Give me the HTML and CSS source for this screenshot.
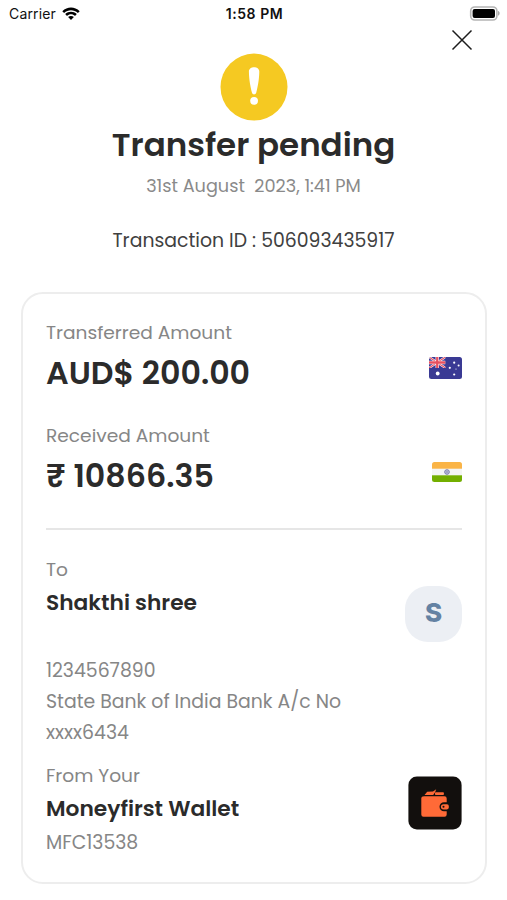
FILE: index.html
```html
<!DOCTYPE html>
<html lang="en">
<head>
<meta charset="utf-8">
<title>Transfer pending</title>
<link rel="stylesheet" href="styles.css">
</head>
<body>
<header class="status">
  <div class="carrier"><span class="carrier-name">Carrier</span>
    <svg class="wifi" viewBox="0 0 18 14"><path d="M0.3 4.2C5.3-.7 12.700-.7 17.700 4.200L15.900 6C12 2.200 6 2.200 2.100 6ZM3.200 7.100C6.500 3.900 11.500 3.900 14.800 7.100L13 8.900C10.700 6.800 7.300 6.800 5 8.900ZM6.100 10C7.700 8.500 10.300 8.500 11.900 10L9 13Z"/></svg>
  </div>
  <span class="clock">1:58 PM</span>
  <svg class="battery" viewBox="0 0 31 15"><rect x="1.700" y="1" width="26.200" height="13" rx="4" fill="#fff" stroke="#b4b4b4" stroke-width="1.600"/><rect x="3.600" y="2.900" width="22.400" height="9.200" rx="2" fill="#000"/><path d="M29 5C31.200 5.700 31.200 9 29 9.700Z" fill="#aaa"/></svg>
</header>
<div class="toolbar">
  <svg class="close" viewBox="0 0 22 22"><path d="M1.500 1.500 20.500 20.500M20.500 1.500 1.500 20.500"/></svg>
</div>
<section class="summary">
  <svg class="alert" viewBox="0 0 68 68"><circle cx="34" cy="33.100" r="33.500" fill="#f5c922"/><path d="M28.900 17.600C28.900 11.800 39.300 11.800 39.300 17.600C39.200 26 37.600 33.500 36.300 38.500C35.700 41 32.500 41 31.900 38.500C30.600 33.500 29 26 28.900 17.600Z" fill="#fff"/><circle cx="34.100" cy="46.800" r="3.900" fill="#fff"/></svg>
  <h1 class="title">Transfer pending</h1>
  <p class="date">31st August&nbsp; 2023, 1:41 PM</p>
  <p class="txid">Transaction ID : 506093435917</p>
</section>
<main class="card">
  <section class="row">
    <div>
      <p class="label">Transferred Amount</p>
      <p class="amount">AUD$ 200.00</p>
    </div>
    <svg class="flag-au" viewBox="0 0 33 22"><clipPath id="au"><rect width="33" height="22" rx="2.500"/></clipPath><clipPath id="uj"><rect width="16.500" height="11"/></clipPath><g clip-path="url(#au)"><rect width="33" height="22" fill="#3a3a94"/><g clip-path="url(#uj)"><path d="M0 0 16.500 11M16.500 0 0 11" stroke="#fff" stroke-width="2.200"/><path d="M0 0 16.500 11M16.500 0 0 11" stroke="#e8505f" stroke-width="1.100"/><path d="M8.250 0V11M0 5.500H16.500" stroke="#fff" stroke-width="3.400"/><path d="M8.250 0V11M0 5.500H16.500" stroke="#e8505f" stroke-width="2.300"/></g><g fill="#fff"><circle cx="8.700" cy="16.500" r="1.900"/><circle cx="25.200" cy="5.700" r="1.100"/><circle cx="20.800" cy="10.800" r="1.100"/><circle cx="29.600" cy="8.500" r="1"/><circle cx="27" cy="12" r=".6"/><circle cx="25.200" cy="17.500" r="1.100"/></g></g></svg>
  </section>
  <section class="row received">
    <div>
      <p class="label">Received Amount</p>
      <p class="amount"><span class="rupee">₹</span>10866.35</p>
    </div>
    <svg class="flag-in" viewBox="0 0 30 20"><clipPath id="in"><rect width="30" height="20" rx="2.500"/></clipPath><g clip-path="url(#in)"><rect width="30" height="20" fill="#f4f5f4"/><rect width="30" height="6.700" fill="#fab446"/><rect y="13.300" width="30" height="6.700" fill="#73af00"/></g><circle cx="15" cy="10" r="2.300" fill="#c5c8dd" stroke="#7779ac" stroke-width="1"/><circle cx="15" cy="10" r=".8" fill="#7779ac"/></svg>
  </section>
  <hr class="divider">
  <section class="row recipient">
    <div>
      <p class="label">To</p>
      <p class="name">Shakthi shree</p>
    </div>
    <div class="avatar">S</div>
  </section>
  <section class="account">
    <p class="detail">1234567890</p>
    <p class="detail">State Bank of India Bank A/c No</p>
    <p class="detail">xxxx6434</p>
  </section>
  <section class="row source">
    <div>
      <p class="label">From Your</p>
      <p class="name">Moneyfirst Wallet</p>
      <p class="detail wallet-id">MFC13538</p>
    </div>
    <svg class="wallet" viewBox="0 0 54 54"><rect x=".4" y=".4" width="53.200" height="53.200" rx="8.500" fill="#120f0d"/><g fill="#ff6a37"><path d="M16 20.300H36.500Q38.700 20.300 38.700 22.500V26.300H36A4.500 4.500 0 0 0 36 35.300H38.700V38.500Q38.700 40.700 36.500 40.700H15.500Q13.300 40.700 13.300 38.500V22Q13.300 20.300 16 20.300Z"/><path d="M16.500 18.900 19.200 15.700 25 15.600 28.200 13.300 27.200 16 25.200 18.900Z"/><rect x="27" y="16.300" width="8.900" height="2.700" rx=".8"/><path d="M35.500 28.200H39Q40.800 28.200 40.800 30V31.600Q40.800 33.400 39 33.400H35.500A2.600 2.600 0 0 1 35.500 28.200Z"/></g><circle cx="35.500" cy="30.800" r="1" fill="#120f0d"/></svg>
  </section>
</main>
</body>
</html>
```

FILE: styles.css
```css
* { box-sizing: border-box; }
body {
  margin: 0;
  min-height: 900px;
  background: #fff;
  color: #2b2b2b;
  font-family: Poppins, Inter, "Liberation Sans", sans-serif;
  overflow: hidden;
}
h1, p { margin: 0; white-space: nowrap; }
svg { display: block; flex: none; }
.status {
  display: grid;
  grid-template-columns: 1fr auto 1fr;
  align-items: center;
  height: 27px;
  padding: 0 7px 0 9px;
  font-family: Inter, sans-serif;
  font-size: 14px;
  color: #111;
}
.carrier { display: flex; align-items: center; gap: 6px; letter-spacing: 0.150px; }
.wifi { width: 18px; height: 14px; }
.clock { font-weight: 600; letter-spacing: 0.550px; }
.battery { width: 31px; height: 15px; justify-self: end; }
.toolbar { display: flex; justify-content: flex-end; height: 27px; padding: 2px 34px 0 0; }
.close { width: 22px; height: 22px; fill: none; stroke: #1c1c1c; stroke-width: 1.5; }
.summary { display: flex; flex-direction: column; align-items: center; height: 238px; }
.alert { width: 68px; height: 68px; overflow: visible; }
.title { font-size: 32.500px; font-weight: 600; line-height: 46px; }
.date { font-size: 17.700px; line-height: 36px; color: #8a8a8a; }
.txid { margin-top: 19px; font-size: 18.850px; line-height: 36px; color: #404040; }
.card {
  width: 466px;
  height: 592px;
  margin: 0 0 0 21px;
  padding: 24px 23px 0;
  border: 2px solid #ededed;
  border-radius: 22px;
}
.row { display: flex; justify-content: space-between; align-items: flex-start; }
.label, .detail { font-size: 18.600px; line-height: 30px; color: #868686; }
.detail { font-size: 18.850px; line-height: 31px; }
.amount { font-size: 31.700px; font-weight: 600; line-height: 51px; }
.rupee { margin-right: 8px; }
.received { margin-top: 22px; }
.flag-au { width: 33px; height: 22px; margin-top: 39px; }
.flag-in { width: 30px; height: 20px; margin-top: 41px; }
.divider { height: 2px; margin: 26px 0 25px; border: 0; background: #e6e6e6; }
.name { font-size: 21.750px; font-weight: 600; line-height: 35px; }
.avatar {
  width: 57px;
  height: 56px;
  margin-top: 31px;
  border-radius: 23px;
  background: #eceff4;
  color: #6482a3;
  font-family: Inter, sans-serif;
  font-size: 26px;
  font-weight: 800;
  line-height: 53px;
  text-align: center;
}
.account { margin-top: 13px; }
.source { margin-top: 13px; }
.wallet-id { padding-top: 1px; }
.wallet { width: 54px; height: 54px; margin-top: 15px; }
```
